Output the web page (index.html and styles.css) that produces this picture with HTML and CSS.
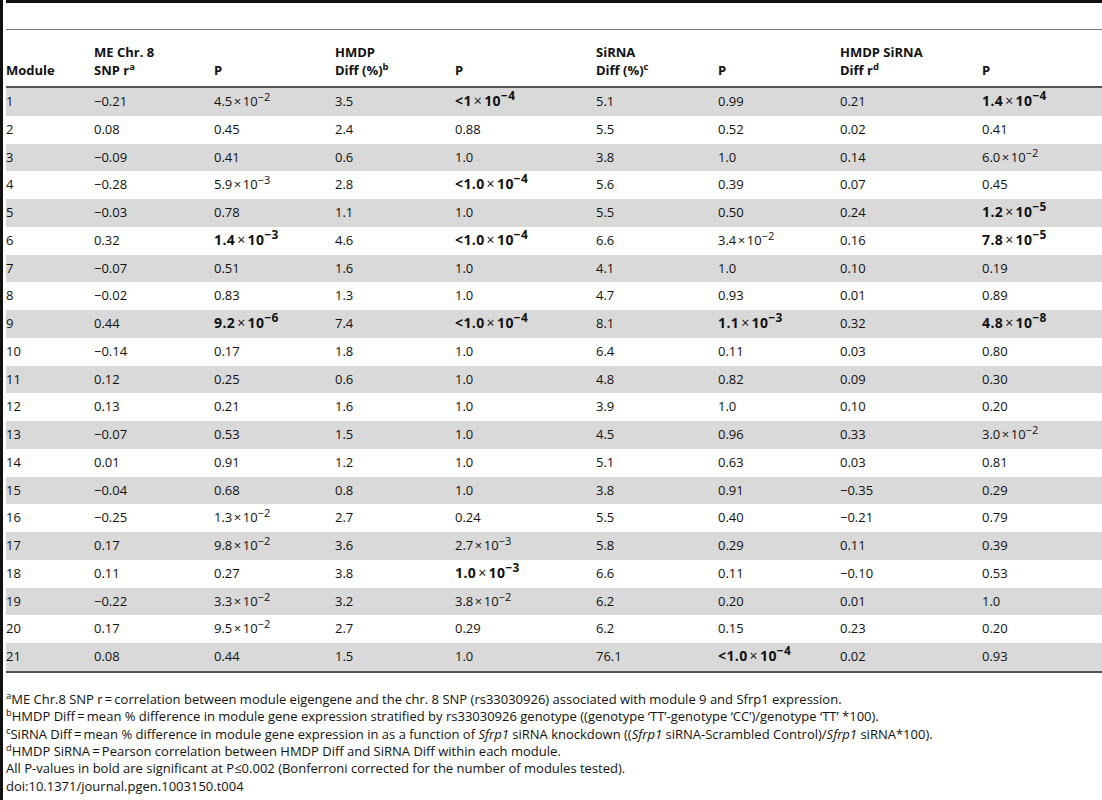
FILE: index.html
```html
<!DOCTYPE html>
<html lang="en">
<head>
    <meta charset="UTF-8">
    <meta name="viewport" content="width=device-width, initial-scale=1.0">
    <title>Table 4</title>
    <link rel="stylesheet" href="styles.css">
</head>
<body>
    <div class="page">
        <div class="caption-bar"></div>
        <table class="data">
            <colgroup>
                <col class="c-module">
                <col class="c-88">
                <col class="c-121">
                <col class="c-120">
                <col class="c-141">
                <col class="c-122">
                <col class="c-122">
                <col class="c-142">
                <col class="c-120">
            </colgroup>
            <thead>
                <tr>
                    <th>Module</th>
                    <th><span class="hl">ME Chr. 8</span><span class="hl">SNP r<sup>a</sup></span></th>
                    <th>P</th>
                    <th><span class="hl">HMDP</span><span class="hl">Diff (%)<sup>b</sup></span></th>
                    <th>P</th>
                    <th><span class="hl">SiRNA</span><span class="hl">Diff (%)<sup>c</sup></span></th>
                    <th>P</th>
                    <th><span class="hl">HMDP SiRNA</span><span class="hl">Diff r<sup>d</sup></span></th>
                    <th>P</th>
                </tr>
            </thead>
            <tbody>
                <tr><td>1</td><td>−0.21</td><td>4.5<i class="x">×</i>10<sup>−2</sup></td><td>3.5</td><td><b>&lt;1<i class="x">×</i>10<sup>−4</sup></b></td><td>5.1</td><td>0.99</td><td>0.21</td><td><b>1.4<i class="x">×</i>10<sup>−4</sup></b></td></tr>
                <tr><td>2</td><td>0.08</td><td>0.45</td><td>2.4</td><td>0.88</td><td>5.5</td><td>0.52</td><td>0.02</td><td>0.41</td></tr>
                <tr><td>3</td><td>−0.09</td><td>0.41</td><td>0.6</td><td>1.0</td><td>3.8</td><td>1.0</td><td>0.14</td><td>6.0<i class="x">×</i>10<sup>−2</sup></td></tr>
                <tr><td>4</td><td>−0.28</td><td>5.9<i class="x">×</i>10<sup>−3</sup></td><td>2.8</td><td><b>&lt;1.0<i class="x">×</i>10<sup>−4</sup></b></td><td>5.6</td><td>0.39</td><td>0.07</td><td>0.45</td></tr>
                <tr><td>5</td><td>−0.03</td><td>0.78</td><td>1.1</td><td>1.0</td><td>5.5</td><td>0.50</td><td>0.24</td><td><b>1.2<i class="x">×</i>10<sup>−5</sup></b></td></tr>
                <tr><td>6</td><td>0.32</td><td><b>1.4<i class="x">×</i>10<sup>−3</sup></b></td><td>4.6</td><td><b>&lt;1.0<i class="x">×</i>10<sup>−4</sup></b></td><td>6.6</td><td>3.4<i class="x">×</i>10<sup>−2</sup></td><td>0.16</td><td><b>7.8<i class="x">×</i>10<sup>−5</sup></b></td></tr>
                <tr><td>7</td><td>−0.07</td><td>0.51</td><td>1.6</td><td>1.0</td><td>4.1</td><td>1.0</td><td>0.10</td><td>0.19</td></tr>
                <tr><td>8</td><td>−0.02</td><td>0.83</td><td>1.3</td><td>1.0</td><td>4.7</td><td>0.93</td><td>0.01</td><td>0.89</td></tr>
                <tr><td>9</td><td>0.44</td><td><b>9.2<i class="x">×</i>10<sup>−6</sup></b></td><td>7.4</td><td><b>&lt;1.0<i class="x">×</i>10<sup>−4</sup></b></td><td>8.1</td><td><b>1.1<i class="x">×</i>10<sup>−3</sup></b></td><td>0.32</td><td><b>4.8<i class="x">×</i>10<sup>−8</sup></b></td></tr>
                <tr><td>10</td><td>−0.14</td><td>0.17</td><td>1.8</td><td>1.0</td><td>6.4</td><td>0.11</td><td>0.03</td><td>0.80</td></tr>
                <tr><td>11</td><td>0.12</td><td>0.25</td><td>0.6</td><td>1.0</td><td>4.8</td><td>0.82</td><td>0.09</td><td>0.30</td></tr>
                <tr><td>12</td><td>0.13</td><td>0.21</td><td>1.6</td><td>1.0</td><td>3.9</td><td>1.0</td><td>0.10</td><td>0.20</td></tr>
                <tr><td>13</td><td>−0.07</td><td>0.53</td><td>1.5</td><td>1.0</td><td>4.5</td><td>0.96</td><td>0.33</td><td>3.0<i class="x">×</i>10<sup>−2</sup></td></tr>
                <tr><td>14</td><td>0.01</td><td>0.91</td><td>1.2</td><td>1.0</td><td>5.1</td><td>0.63</td><td>0.03</td><td>0.81</td></tr>
                <tr><td>15</td><td>−0.04</td><td>0.68</td><td>0.8</td><td>1.0</td><td>3.8</td><td>0.91</td><td>−0.35</td><td>0.29</td></tr>
                <tr><td>16</td><td>−0.25</td><td>1.3<i class="x">×</i>10<sup>−2</sup></td><td>2.7</td><td>0.24</td><td>5.5</td><td>0.40</td><td>−0.21</td><td>0.79</td></tr>
                <tr><td>17</td><td>0.17</td><td>9.8<i class="x">×</i>10<sup>−2</sup></td><td>3.6</td><td>2.7<i class="x">×</i>10<sup>−3</sup></td><td>5.8</td><td>0.29</td><td>0.11</td><td>0.39</td></tr>
                <tr><td>18</td><td>0.11</td><td>0.27</td><td>3.8</td><td><b>1.0<i class="x">×</i>10<sup>−3</sup></b></td><td>6.6</td><td>0.11</td><td>−0.10</td><td>0.53</td></tr>
                <tr><td>19</td><td>−0.22</td><td>3.3<i class="x">×</i>10<sup>−2</sup></td><td>3.2</td><td>3.8<i class="x">×</i>10<sup>−2</sup></td><td>6.2</td><td>0.20</td><td>0.01</td><td>1.0</td></tr>
                <tr><td>20</td><td>0.17</td><td>9.5<i class="x">×</i>10<sup>−2</sup></td><td>2.7</td><td>0.29</td><td>6.2</td><td>0.15</td><td>0.23</td><td>0.20</td></tr>
                <tr><td>21</td><td>0.08</td><td>0.44</td><td>1.5</td><td>1.0</td><td>76.1</td><td><b>&lt;1.0<i class="x">×</i>10<sup>−4</sup></b></td><td>0.02</td><td>0.93</td></tr>
            </tbody>
        </table>
        <div class="notes">
            <p><sup>a</sup>ME Chr.8 SNP r&thinsp;=&thinsp;correlation between module eigengene and the chr. 8 SNP (rs33030926) associated with module 9 and Sfrp1 expression.</p>
            <p><sup>b</sup>HMDP Diff&thinsp;=&thinsp;mean % difference in module gene expression stratified by rs33030926 genotype ((genotype ‘TT’-genotype ‘CC’)/genotype ‘TT’ *100).</p>
            <p><sup>c</sup>SiRNA Diff&thinsp;=&thinsp;mean % difference in module gene expression in as a function of <i>Sfrp1</i> siRNA knockdown ((<i>Sfrp1</i> siRNA-Scrambled Control)/<i>Sfrp1</i> siRNA*100).</p>
            <p><sup>d</sup>HMDP SiRNA&thinsp;=&thinsp;Pearson correlation between HMDP Diff and SiRNA Diff within each module.</p>
            <p>All P-values in bold are significant at P≤0.002 (Bonferroni corrected for the number of modules tested).</p>
            <p>doi:10.1371/journal.pgen.1003150.t004</p>
        </div>
    </div>
</body>
</html>
```

FILE: styles.css
```css
body {
    margin: 0;
    font-family: "Open Sans", "Noto Sans", sans-serif;
    font-size: 13px;
    color: #111;
    background: #fff;
}
.page {
    border-left: 3px solid #111;
    padding-left: 3px;
    min-height: 800px;
    box-sizing: border-box;
}
.caption-bar {
    border-top: 3px solid #111;
    border-bottom: 1px solid #777;
    height: 26px;
}

/* table */
.data {
    width: 1096px;
    border-collapse: collapse;
    table-layout: fixed;
}
.c-module { width: 88px; }
.c-88 { width: 120px; }
.c-120 { width: 120px; }
.c-121 { width: 121px; }
.c-122 { width: 122px; }
.c-141 { width: 141px; }
.c-142 { width: 142px; }
.data th {
    text-align: left;
    vertical-align: bottom;
    font-weight: bold;
    line-height: 18px;
    padding: 13px 0 7px;
    border-bottom: 2px solid #555;
}
.hl {
    display: block;
    height: 18px;
}
.hl + .hl {
    margin-top: 0;
}
.data td {
    padding: 5px 0;
    height: 17.75px;
    line-height: 17.75px;
    white-space: nowrap;
}
.data tbody tr:nth-child(odd) {
    background-color: #d9d9d9;
}
.data tbody tr:last-child td {
    border-bottom: 2px solid #555;
}
.data td b {
    font-size: 14px;
    line-height: 0;
    letter-spacing: 0.4px;
}
.x {
    font-style: normal;
    font-weight: normal;
    margin: 0 1.5px;
}
.data td b .x {
    margin: 0 2px;
}
.data td sup {
    font-size: 0.85em;
}
sup {
    font-size: 0.72em;
    line-height: 0;
}

/* footnotes */
.notes {
    margin-top: 18px;
}
.notes p {
    margin: 0;
    line-height: 17.4px;
}
```
